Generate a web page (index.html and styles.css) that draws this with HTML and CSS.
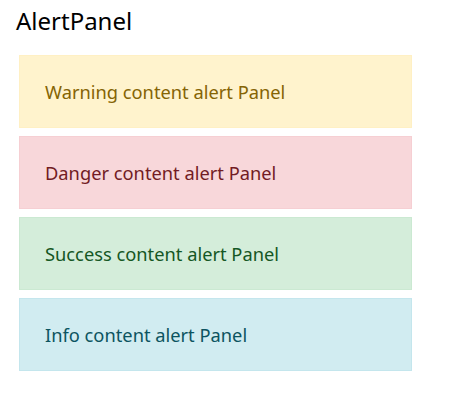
FILE: index.html
```html
<!DOCTYPE html>
<html lang="en">
<head>
    <meta charset="UTF-8">
    <title>AlertPanel</title>
    <link rel="stylesheet" href="styles.css">
</head>
<body>
    <div class="page">
        <h1 class="title">AlertPanel</h1>
        <div class="panels">
            <div class="alert alert-warning">Warning content alert Panel</div>
            <div class="alert alert-danger">Danger content alert Panel</div>
            <div class="alert alert-success">Success content alert Panel</div>
            <div class="alert alert-info">Info content alert Panel</div>
        </div>
    </div>
</body>
</html>
```

FILE: styles.css
```css
body {
    margin: 0;
    font-family: "Noto Sans", "Open Sans", sans-serif;
    background: #fff;
}
.page {
    padding: 4px 16px;
}
.title {
    margin: 0;
    font-size: 24px;
    font-weight: normal;
    line-height: 34px;
    color: #000;
}
.panels {
    display: flex;
    flex-direction: column;
    gap: 8px;
    width: 393px;
    margin: 17px 0 0 3px;
}
.alert {
    box-sizing: border-box;
    height: 73px;
    padding: 0 25px;
    border: 1px solid transparent;
    display: flex;
    align-items: center;
    font-size: 18.3px;
}
.alert-warning {
    background: #fff3cd;
    border-color: #fff0c4;
    color: #856404;
}
.alert-danger {
    background: #f8d7da;
    border-color: #f6cfd3;
    color: #721c24;
}
.alert-success {
    background: #d4edda;
    border-color: #cbe9d2;
    color: #155724;
}
.alert-info {
    background: #d1ecf1;
    border-color: #c4e6ed;
    color: #0c5460;
}
```
